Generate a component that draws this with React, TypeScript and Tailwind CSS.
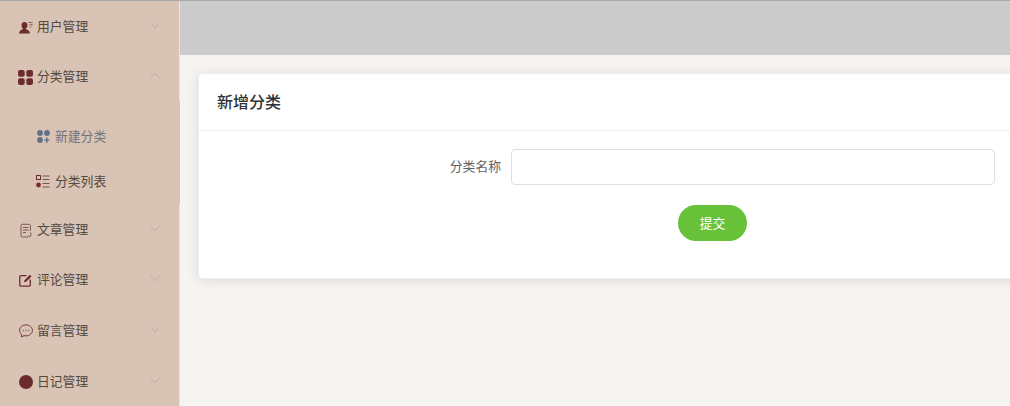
import React from "react";

const font = "font-['Noto_Sans_CJK_SC','Liberation_Sans',sans-serif]";
const maroon = "#6b2c2c";

const UserIcon = () => (
  <svg width="14" height="13" viewBox="0 0 14 13" fill={maroon}>
    <path d="M5.5 1C7.3 1 8.5 2.4 8.5 4.2 8.5 5.7 7.7 6.9 7 7.5v.8c1.9.5 3.6 1.5 3.9 4.2H0c.3-2.7 2-3.700 3.900-4.200v-.8C3.200 6.900 2.500 5.700 2.500 4.200 2.500 2.400 3.700 1 5.500 1z" />
    <path d="M9.500 1.500h4M10.500 3.700h3M10.500 5.900h2" stroke="#8c6058" strokeWidth="1" fill="none" />
  </svg>
);
const GridIcon = () => (
  <svg width="15" height="15" viewBox="0 0 15 15" fill={maroon}>
    <rect x="0" y="0" width="6.700" height="6.700" rx="2" />
    <rect x="8.300" y="0" width="6.700" height="6.700" rx="2" />
    <rect x="0" y="8.300" width="6.700" height="6.700" rx="2" />
    <rect x="8.300" y="8.300" width="6.700" height="6.700" rx="2" />
  </svg>
);
const NewIcon = () => (
  <svg width="13" height="13" viewBox="0 0 13 13" fill="#5f7289">
    <circle cx="3" cy="3" r="2.900" />
    <circle cx="10" cy="3" r="2.900" />
    <circle cx="3" cy="10" r="2.900" />
    <path d="M9.200 7.500h1.400v1.900h1.900v1.400h-1.900v1.900H9.200v-1.900H7.300V9.400h1.900z" />
  </svg>
);
const ListIcon = () => (
  <svg width="14" height="13" viewBox="0 0 14 13" fill="none">
    <rect x="0.500" y="0.500" width="4" height="4" stroke={maroon} strokeWidth="1" />
    <circle cx="2.500" cy="10" r="2.400" fill="#7c2a22" />
    <path d="M6.500 1h7M6.500 4.500h7M6.500 8.500h7M6.500 12h7" stroke="#6d5a55" strokeWidth="1" />
  </svg>
);
const DocIcon = () => (
  <svg width="12" height="15" viewBox="0 0 12 15" fill="none" stroke="#7a5a58" strokeWidth="1">
    <path d="M8 14H2.200A1.200 1.200 0 0 1 1 12.800V2.500A1.200 1.200 0 0 1 2.200 1.300h7a1.200 1.200 0 0 1 1.200 1.200V8" />
    <path d="M3 4.500h5.500M3 7h5.500M3 9.500h3" />
    <path d="M10.800 9.500v3a1.200 1.200 0 0 1-2.400 0" />
  </svg>
);
const EditIcon = () => (
  <svg width="13" height="13" viewBox="0 0 13 13" fill="none">
    <path d="M7.500 1.700H2A1.200 1.200 0 0 0 .8 2.900V11A1.200 1.200 0 0 0 2 12.200h8.100a1.200 1.200 0 0 0 1.200-1.200V5.500" stroke={maroon} strokeWidth="1.300" />
    <path d="M5 8.200l.5-2L10.900.8l1.600 1.600-5.400 5.300z" fill={maroon} />
  </svg>
);
const ChatIcon = () => (
  <svg width="14" height="14" viewBox="0 0 15 15" fill="none">
    <path d="M7.500 1C3.600 1 .6 3.600.6 6.800c0 1.700.8 3.200 2.200 4.200l-.3 2.900 3-1.400c.6.1 1.300.2 2 .2 3.900 0 6.900-2.700 6.900-5.900S11.400 1 7.500 1z" stroke={maroon} strokeWidth="1" />
    <circle cx="4.600" cy="7" r=".75" fill="#7a6462" />
    <circle cx="7.500" cy="7" r=".75" fill="#7a6462" />
    <circle cx="10.400" cy="7" r=".75" fill="#7a6462" />
  </svg>
);
const DotIcon = () => (
  <svg width="14" height="14" viewBox="0 0 14 14">
    <circle cx="7" cy="7" r="7" fill={maroon} />
  </svg>
);

const Chevron = ({ up }: { up?: boolean }) => (
  <svg width="12" height="7" viewBox="0 0 12 7" fill="none" stroke="#b8aeae" strokeWidth="1" className="mr-[18px] mb-[1px]">
    <path d={up ? "M1.500 6 6 1.200 10.500 6" : "M1.500 1 6 5.800 10.500 1"} />
  </svg>
);

const MenuItem = ({ icon, label, up, h = "h-[50px]" }: { icon: React.ReactNode; label: string; up?: boolean; h?: string }) => (
  <div className={`${h} flex items-center border-r border-[#ebe4df] pl-[18px]`}>
    <span className="w-[15px] flex justify-center shrink-0 mt-[2px]">{icon}</span>
    <span className="ml-1 flex-1 text-[12.8px] text-[#55493f]">{label}</span>
    <Chevron up={up} />
  </div>
);

const SubItem = ({ icon, label, color }: { icon: React.ReactNode; label: string; color: string }) => (
  <div className={`h-[45px] flex items-center pl-9 text-[12.8px] ${color}`}>
    <span className="w-[14px] flex justify-center shrink-0 mt-[1px]">{icon}</span>
    <span className="ml-[5px]">{label}</span>
  </div>
);

export default function App() {
  return (
    <div className={`w-[1010px] h-[406px] overflow-hidden flex flex-col bg-[#f5f4f0] ${font}`}>
      <div className="h-px shrink-0 bg-[#a8a8a8]" />
      <div className="flex flex-1 min-h-0">
        <aside className="w-[180px] shrink-0 bg-[#d8c3b5] overflow-hidden">
          <MenuItem icon={<UserIcon />} label="用户管理" />
          <MenuItem icon={<GridIcon />} label="分类管理" up />
          <div className="pt-3 pb-px">
            <SubItem icon={<NewIcon />} label="新建分类" color="text-[#72737f]" />
            <SubItem icon={<ListIcon />} label="分类列表" color="text-[#55493f]" />
          </div>
          <MenuItem icon={<DocIcon />} label="文章管理" />
          <MenuItem icon={<EditIcon />} label="评论管理" />
          <MenuItem icon={<ChatIcon />} label="留言管理" h="h-[51px]" />
          <MenuItem icon={<DotIcon />} label="日记管理" h="h-[51px]" />
        </aside>
        <div className="flex-1 min-w-0 flex flex-col">
          <header className="h-[54px] shrink-0 bg-[#cbcbcb]" />
          <main className="flex-1 pt-[18px] pl-[18px] overflow-hidden">
            <section className="w-[840px] h-[206px] bg-white rounded-[4px] border border-[#ebeef5] shadow-[0_2px_12px_0_rgba(0,0,0,0.1)]">
              <div className="h-[57px] flex items-center pl-[18px] pb-[3px] border-b border-[#ebeef5] text-base font-medium text-[#303133]">
                新增分类
              </div>
              <div className="pt-[18px]">
                <div className="flex items-center">
                  <label className="w-[302px] text-right text-[12.8px] text-[#606266] pb-[2px] shrink-0">分类名称</label>
                  <div className="ml-[10px] w-[484px] h-9 bg-white border border-[#dcdfe6] rounded-[4px]" />
                </div>
                <div className="mt-5 pl-[479px]">
                  <button className="w-[69px] h-9 rounded-[18px] bg-[#67c23a] text-white text-[12.8px]">提交</button>
                </div>
              </div>
            </section>
          </main>
        </div>
      </div>
    </div>
  );
}
